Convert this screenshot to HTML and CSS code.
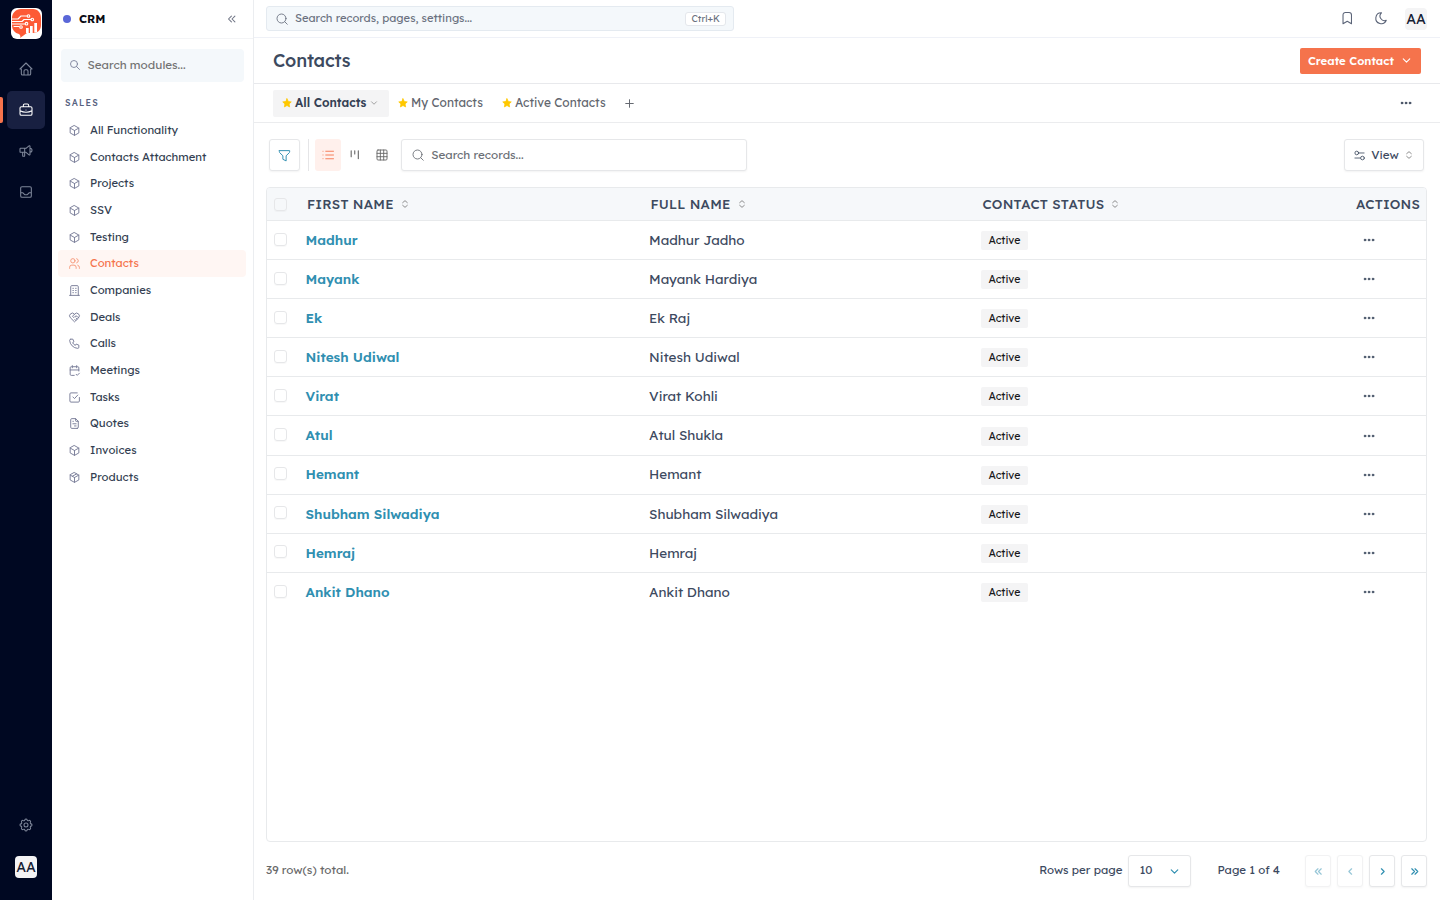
FILE: index.html
```
<!DOCTYPE html>
<html lang="en">
<head>
  <meta charset="UTF-8" />
  <title>Contacts - CRM</title>
  <link rel="stylesheet" href="styles.css">
</head>
<body>
  <svg class="sprite">
    <symbol id="home" viewBox="0 0 24 24"><path d="M5 12H3l9-9 9 9h-2M5 12v7a2 2 0 0 0 2 2h10a2 2 0 0 0 2-2v-7M9 21v-6a2 2 0 0 1 2-2h2a2 2 0 0 1 2 2v6"/></symbol>
    <symbol id="briefcase" viewBox="0 0 24 24"><path d="M5 7h14a2 2 0 0 1 2 2v9a2 2 0 0 1-2 2H5a2 2 0 0 1-2-2V9a2 2 0 0 1 2-2zM8 7V5a2 2 0 0 1 2-2h4a2 2 0 0 1 2 2v2M12 12v.01M3 13a20 20 0 0 0 18 0"/></symbol>
    <symbol id="speaker" viewBox="0 0 24 24"><path d="M18 8a3 3 0 0 1 0 6M10 8v11a1 1 0 0 1-1 1H8a1 1 0 0 1-1-1v-5M12 8l4.524-3.77A.9.9 0 0 1 18 4.922v12.156a.9.9 0 0 1-1.476.692L12 14H4a1 1 0 0 1-1-1V9a1 1 0 0 1 1-1h8"/></symbol>
    <symbol id="inbox" viewBox="0 0 24 24"><path d="M6 4h12a2 2 0 0 1 2 2v12a2 2 0 0 1-2 2H6a2 2 0 0 1-2-2V6a2 2 0 0 1 2-2zM4 13h3l3 3h4l3-3h3"/></symbol>
    <symbol id="settings" viewBox="0 0 24 24"><path d="M10.325 4.317c.426-1.756 2.924-1.756 3.35 0a1.724 1.724 0 0 0 2.573 1.066c1.543-.94 3.31.826 2.37 2.37a1.724 1.724 0 0 0 1.065 2.572c1.756.426 1.756 2.924 0 3.35a1.724 1.724 0 0 0-1.066 2.573c.94 1.543-.826 3.31-2.37 2.37a1.724 1.724 0 0 0-2.572 1.065c-.426 1.756-2.924 1.756-3.35 0a1.724 1.724 0 0 0-2.573-1.066c-1.543.94-3.31-.826-2.37-2.37a1.724 1.724 0 0 0-1.065-2.572c-1.756-.426-1.756-2.924 0-3.35a1.724 1.724 0 0 0 1.066-2.573c-.94-1.543.826-3.31 2.37-2.37 1 .608 2.296.07 2.572-1.065z"/><circle cx="12" cy="12" r="3"/></symbol>
    <symbol id="cube" viewBox="0 0 24 24"><path d="M12 3l8 4.5v9L12 21l-8-4.5v-9zM12 12l8-4.5M12 12v9M12 12L4 7.5"/></symbol>
    <symbol id="package" viewBox="0 0 24 24"><path d="M12 3l8 4.5v9L12 21l-8-4.5v-9zM12 12l8-4.5M12 12v9M12 12L4 7.5M16 5.25l-8 4.5"/></symbol>
    <symbol id="users" viewBox="0 0 24 24"><circle cx="9" cy="7" r="4"/><path d="M3 21v-2a4 4 0 0 1 4-4h4a4 4 0 0 1 4 4v2M16 3.13a4 4 0 0 1 0 7.75M21 21v-2a4 4 0 0 0-3-3.85"/></symbol>
    <symbol id="building" viewBox="0 0 24 24"><path d="M3 21h18M9 8h1M9 12h1M9 16h1M14 8h1M14 12h1M14 16h1M5 21V5a2 2 0 0 1 2-2h10a2 2 0 0 1 2 2v16"/></symbol>
    <symbol id="deal" viewBox="0 0 24 24"><path d="M19.5 12.572L12 20l-7.5-7.428A5 5 0 1 1 12 6.006a5 5 0 1 1 7.5 6.572M12 6L8.707 9.293a1 1 0 0 0 0 1.414l.543.543c.69.69 1.81.69 2.5 0l1-1a3.182 3.182 0 0 1 4.5 0l2.25 2.25M12.5 15.5l2 2M15 13l2 2"/></symbol>
    <symbol id="phone" viewBox="0 0 24 24"><path d="M5 4h4l2 5-2.5 1.5a11 11 0 0 0 5 5L15 13l5 2v4a2 2 0 0 1-2 2A16 16 0 0 1 3 6a2 2 0 0 1 2-2"/></symbol>
    <symbol id="calendar" viewBox="0 0 24 24"><path d="M11.5 21H6a2 2 0 0 1-2-2V7a2 2 0 0 1 2-2h12a2 2 0 0 1 2 2v6M16 3v4M8 3v4M4 11h16M15 19l2 2 4-4"/></symbol>
    <symbol id="checkbox" viewBox="0 0 24 24"><path d="M9 11l3 3 6-6.500M21 12v6.500a2 2 0 0 1-2 2H5.500a2 2 0 0 1-2-2V5.500a2 2 0 0 1 2-2H17"/></symbol>
    <symbol id="file" viewBox="0 0 24 24"><path d="M14 3v4a1 1 0 0 0 1 1h4M17 21H7a2 2 0 0 1-2-2V5a2 2 0 0 1 2-2h7l5 5v11a2 2 0 0 1-2 2zM9 8h1M9 12.500h6M12 16.500h3"/></symbol>
    <symbol id="search" viewBox="0 0 24 24"><circle cx="10" cy="10" r="7"/><path d="M21 21l-6-6"/></symbol>
    <symbol id="search-lg" viewBox="0 0 24 24"><circle cx="11" cy="11" r="9"/><path d="M22.500 22.500l-5-5"/></symbol>
    <symbol id="dbl-left" viewBox="0 0 24 24"><path d="M11 7l-5 5 5 5M17 7l-5 5 5 5"/></symbol>
    <symbol id="dbl-right" viewBox="0 0 24 24"><path d="M7 7l5 5-5 5M13 7l5 5-5 5"/></symbol>
    <symbol id="left" viewBox="0 0 24 24"><path d="M14 7l-5 5 5 5"/></symbol>
    <symbol id="right" viewBox="0 0 24 24"><path d="M10 7l5 5-5 5"/></symbol>
    <symbol id="down" viewBox="0 0 24 24"><path d="M6 9l6 6 6-6"/></symbol>
    <symbol id="sort" viewBox="0 0 24 24"><path d="M5 8l7-6 7 6M19 16l-7 6-7-6"/></symbol>
    <symbol id="bookmark" viewBox="0 0 24 24"><path d="M19 6.500v14.500l-7-4-7 4V6.500A4 4 0 0 1 9 2.500h6a4 4 0 0 1 4 4z"/></symbol>
    <symbol id="moon" viewBox="0 0 24 24"><path d="M12 3h.393a7.5 7.5 0 0 0 7.92 12.446A9 9 0 1 1 12 2.992z"/></symbol>
    <symbol id="star" viewBox="0 0 24 24"><path d="M12 1.8l3.1 6.5 7.1 1-5.2 5 1.3 7.1L12 18l-6.3 3.4L7 14.300l-5.200-5 7.100-1z"/></symbol>
    <symbol id="plus" viewBox="0 0 24 24"><path d="M12 5v14M5 12h14"/></symbol>
    <symbol id="dots" viewBox="0 0 24 24"><circle cx="4" cy="12" r="2"/><circle cx="12" cy="12" r="2"/><circle cx="20" cy="12" r="2"/></symbol>
    <symbol id="filter" viewBox="0 0 24 24"><path d="M2.500 3h19v2.400a2 2 0 0 1-.6 1.400L15 12.500V22l-6-3v-6.500L3.100 6.800a2 2 0 0 1-.6-1.400z"/></symbol>
    <symbol id="list" viewBox="0 0 24 24"><path d="M7.500 4.500H23M7.500 12H23M7.500 19.500H23M2 4.500v.01M2 12v.01M2 19.500v.01"/></symbol>
    <symbol id="kanban" viewBox="0 0 24 24"><path d="M3 2v15M12 2v8M21 2v20"/></symbol>
    <symbol id="grid" viewBox="0 0 24 24"><rect x="2" y="2" width="20" height="20" rx="2"/><path d="M2 8.700h20M2 15.400h20M8.700 2v20M15.400 2v20"/></symbol>
    <symbol id="sliders" viewBox="0 0 24 24"><circle cx="6" cy="6.500" r="4"/><circle cx="18.500" cy="17.500" r="4"/><path d="M10 6.500h12M2 17.500h12"/></symbol>
  </svg>

  <div class="app">
    <aside class="rail">
      <svg class="logo" viewBox="0 0 31 31">
        <rect width="31" height="31" rx="6" fill="#fff"/>
        <path d="M10 1h12c5 0 8 4 8 9v7c0 5-3 8-8 8h-6c-2 1-4 3-7 5 1-2 0-3-1-4-4-1-7-4-7-9v-7c0-5 4-9 9-9z" fill="#fd5a35"/>
        <g fill="none" stroke="#fff" stroke-width="1.100">
          <path d="M1 11h6l3-3h6M1 13.500h10l2-2h7M1 16h13M3 18.500h5"/>
          <circle cx="17.500" cy="8" r="1.300"/><circle cx="21.300" cy="11.500" r="1.300"/><circle cx="15.500" cy="15.700" r="1.300"/><circle cx="10" cy="19" r="1.300"/>
        </g>
        <path d="M15 20h2.700v5H15zM19 18h2.700v7H19zM23.300 15H26v9.500h-2.700z" fill="#fff"/>
      </svg>
      <a class="rail-item"><svg><use href="#home"/></svg></a>
      <a class="rail-item active"><svg><use href="#briefcase"/></svg></a>
      <a class="rail-item"><svg><use href="#speaker"/></svg></a>
      <a class="rail-item"><svg><use href="#inbox"/></svg></a>
      <a class="rail-item bottom"><svg><use href="#settings"/></svg></a>
      <span class="avatar">AA</span>
    </aside>

    <aside class="sidebar">
      <div class="side-head"><i class="dot"></i><b>CRM</b><svg><use href="#dbl-left"/></svg></div>
      <div class="side-search"><svg><use href="#search"/></svg><span>Search modules...</span></div>
      <div class="side-label">SALES</div>
      <nav>
        <a><svg><use href="#cube"/></svg><span>All Functionality</span></a>
        <a><svg><use href="#cube"/></svg><span>Contacts Attachment</span></a>
        <a><svg><use href="#cube"/></svg><span>Projects</span></a>
        <a><svg><use href="#cube"/></svg><span>SSV</span></a>
        <a><svg><use href="#cube"/></svg><span>Testing</span></a>
        <a class="active"><svg><use href="#users"/></svg><span>Contacts</span></a>
        <a><svg><use href="#building"/></svg><span>Companies</span></a>
        <a><svg><use href="#deal"/></svg><span>Deals</span></a>
        <a><svg><use href="#phone"/></svg><span>Calls</span></a>
        <a><svg><use href="#calendar"/></svg><span>Meetings</span></a>
        <a><svg><use href="#checkbox"/></svg><span>Tasks</span></a>
        <a><svg><use href="#file"/></svg><span>Quotes</span></a>
        <a><svg><use href="#cube"/></svg><span>Invoices</span></a>
        <a><svg><use href="#package"/></svg><span>Products</span></a>
      </nav>
    </aside>

    <main>
      <header class="topbar">
        <div class="global-search"><svg><use href="#search-lg"/></svg><span>Search records, pages, settings...</span><kbd>Ctrl+K</kbd></div>
        <div class="top-icons">
          <svg><use href="#bookmark"/></svg>
          <svg><use href="#moon"/></svg>
          <span class="avatar">AA</span>
        </div>
      </header>

      <div class="title-row">
        <h1>Contacts</h1>
        <button class="create"><span>Create Contact</span><svg><use href="#down"/></svg></button>
      </div>

      <div class="tabs">
        <a class="tab active"><svg class="star"><use href="#star"/></svg><span>All Contacts</span><svg class="caret"><use href="#down"/></svg></a>
        <a class="tab my"><svg class="star"><use href="#star"/></svg><span>My Contacts</span></a>
        <a class="tab"><svg class="star"><use href="#star"/></svg><span>Active Contacts</span></a>
        <svg class="add"><use href="#plus"/></svg>
        <svg class="dots"><use href="#dots"/></svg>
      </div>

      <div class="toolbar">
        <button class="box filter"><svg><use href="#filter"/></svg></button>
        <i class="sep"></i>
        <button class="mode active"><svg><use href="#list"/></svg></button>
        <button class="mode"><svg class="small"><use href="#kanban"/></svg></button>
        <button class="mode"><svg><use href="#grid"/></svg></button>
        <div class="box record-search"><svg><use href="#search-lg"/></svg><span>Search records...</span></div>
        <button class="box view"><svg><use href="#sliders"/></svg><span>View</span><svg class="sort"><use href="#sort"/></svg></button>
      </div>

      <section class="table">
        <div class="row head">
          <i class="check"></i>
          <div><span>FIRST NAME</span><svg class="sort"><use href="#sort"/></svg></div>
          <div><span>FULL NAME</span><svg class="sort"><use href="#sort"/></svg></div>
          <div><span>CONTACT STATUS</span><svg class="sort"><use href="#sort"/></svg></div>
          <div><span>ACTIONS</span></div>
        </div>
        <div id="rows"></div>
      </section>

      <footer>
        <span class="total">39 row(s) total.</span>
        <span class="per-page">Rows per page</span>
        <div class="box select"><span>10</span><svg><use href="#down"/></svg></div>
        <span class="page">Page 1 of 4</span>
        <div class="pager">
          <button class="box off"><svg><use href="#dbl-left"/></svg></button>
          <button class="box off"><svg><use href="#left"/></svg></button>
          <button class="box"><svg><use href="#right"/></svg></button>
          <button class="box"><svg><use href="#dbl-right"/></svg></button>
        </div>
      </footer>
    </main>
  </div>

  <script>
    const contacts = [
      ['Madhur', 'Madhur Jadho'],
      ['Mayank', 'Mayank Hardiya'],
      ['Ek', 'Ek Raj'],
      ['Nitesh Udiwal', 'Nitesh Udiwal'],
      ['Virat', 'Virat Kohli'],
      ['Atul', 'Atul Shukla'],
      ['Hemant', 'Hemant'],
      ['Shubham Silwadiya', 'Shubham Silwadiya'],
      ['Hemraj', 'Hemraj'],
      ['Ankit Dhano', 'Ankit Dhano']
    ];

    document.getElementById('rows').innerHTML = contacts.map(([first, full]) => `
      <div class="row">
        <i class="check"></i>
        <div class="cell"><a class="name">${first}</a></div>
        <div class="cell"><span class="full">${full}</span></div>
        <div><span class="badge">Active</span></div>
        <div><svg class="dots"><use href="#dots"/></svg></div>
      </div>`).join('');
  </script>
</body>
</html>
```
FILE: styles.css
```
* {
  box-sizing: border-box;
}
body {
  margin: 0;
  font-family: Lexend, Inter, sans-serif;
  font-size: 11.5px;
  color: #3d4a5f;
  background: #fff;
}
svg {
  width: 13px;
  height: 13px;
  flex: none;
  fill: none;
  stroke: currentColor;
  stroke-width: 1.8;
  stroke-linecap: round;
  stroke-linejoin: round;
}
button {
  font: inherit;
  border: none;
  padding: 0;
  background: none;
  color: inherit;
}
span, b, h1, a {
  white-space: nowrap;
}
.sprite {
  display: none;
}
.app {
  display: flex;
  height: 900px;
  overflow: hidden;
}

/* icon rail */
.rail {
  width: 52px;
  flex: none;
  background: #000822;
  display: flex;
  flex-direction: column;
  align-items: center;
  padding: 8px 0 22px;
}
.logo {
  width: 31px;
  height: 31px;
  margin-bottom: 10.5px;
  stroke: none;
}
.rail-item {
  width: 38px;
  height: 38px;
  margin-bottom: 3px;
  border-radius: 5px;
  display: flex;
  align-items: center;
  justify-content: center;
  color: #7d8699;
  position: relative;
}
.rail-item svg {
  width: 16px;
  height: 16px;
  stroke-width: 1.6;
}
.rail-item.active {
  background: #182041;
  color: #fff;
}
.rail-item.active::before {
  content: "";
  position: absolute;
  left: -7px;
  top: 6px;
  width: 3px;
  height: 26px;
  border-radius: 0 2px 2px 0;
  background: #f5734c;
}
.rail-item.bottom {
  margin-top: auto;
}
.rail-item.bottom svg {
  width: 16px;
  height: 16px;
}
.avatar {
  width: 22px;
  height: 22px;
  border-radius: 4px;
  background: #f4f4f5;
  color: #142033;
  font-size: 14px;
  line-height: 22px;
  text-align: center;
}
.rail .avatar {
  margin-top: 9px;
}

/* module list */
.sidebar {
  width: 202px;
  flex: none;
  border-right: 1px solid #ebedf0;
}
.side-head {
  height: 39px;
  padding: 0 14px 1px 11px;
  border-bottom: 1px solid #f3f4f6;
  display: flex;
  align-items: center;
}
.side-head b {
  margin-left: 8px;
  padding-bottom: 1px;
  font-size: 11.6px;
  font-weight: 700;
  color: #0a0a14;
}
.side-head svg {
  margin-left: auto;
  width: 14px;
  height: 14px;
  color: #707585;
}
.dot {
  width: 8px;
  height: 8px;
  border-radius: 50%;
  background: #5a67d8;
}
.side-search {
  margin: 10px 9px 0;
  height: 33px;
  padding: 0 8px 2px;
  border-radius: 4px;
  background: #f4f8fb;
  display: flex;
  align-items: center;
  gap: 6.5px;
  color: #737373;
  font-size: 11.67px;
}
.side-search svg {
  width: 12px;
  height: 12px;
  color: #7b809a;
}
.side-label {
  margin: 14px 0 8px 13px;
  line-height: 13px;
  font-size: 8.8px;
  font-weight: 500;
  letter-spacing: 1.2px;
  color: #56617e;
}
nav a {
  height: 26.67px;
  margin: 0 7px 0 6px;
  padding-left: 10px;
  border-radius: 4px;
  display: flex;
  align-items: center;
  gap: 9px;
  font-size: 11.3px;
  font-weight: 450;
  color: #343f52;
}
nav span {
  padding-bottom: .4px;
}
nav svg {
  margin-top: .4px;
  color: #7b809a;
}
nav .active {
  background: #fff6f3;
  color: #f5734c;
}
nav .active svg {
  color: #f69a7c;
}

/* content */
main {
  flex: 1;
  display: flex;
  flex-direction: column;
}
.topbar {
  height: 38px;
  border-bottom: 1px solid #eff1f7;
  padding: 0 13px 0 12px;
  display: flex;
  align-items: center;
  justify-content: space-between;
}
.global-search {
  width: 468px;
  height: 25px;
  padding: 0 7px 0 9px;
  border: 1px solid #e4eaf0;
  border-radius: 3px;
  background: #f4f8fb;
  display: flex;
  align-items: center;
  gap: 7px;
  font-size: 11.2px;
  color: #6b7280;
}
.global-search span {
  padding-bottom: 2px;
}
.global-search svg, .record-search svg {
  width: 12px;
  height: 12px;
}
kbd {
  margin-left: auto;
  padding: 0 5px;
  border: 1px solid #e4e7ec;
  border-radius: 3px;
  background: #fff;
  font-family: inherit;
  font-size: 9.4px;
  font-weight: 400;
  line-height: 12px;
}
.top-icons {
  display: flex;
  align-items: center;
  gap: 19px;
  color: #5b6478;
}
.top-icons svg {
  width: 14.5px;
  height: 14.5px;
}
.top-icons .avatar {
  margin-left: -2px;
}
.title-row {
  height: 46px;
  border-bottom: 1px solid #e8e9ec;
  padding: 0 19px;
  display: flex;
  align-items: center;
  justify-content: space-between;
}
h1 {
  margin: 0;
  font-size: 18px;
  font-weight: 500;
  letter-spacing: -.2px;
}
.create {
  width: 121px;
  height: 26px;
  padding: 0 8px;
  border-radius: 2px;
  background: #f5734c;
  color: #fff;
  font-size: 11.4px;
  font-weight: 600;
  display: flex;
  align-items: center;
  justify-content: space-between;
}
.create svg {
  width: 13px;
  height: 13px;
  stroke-width: 2;
}
.tabs {
  height: 39px;
  border-bottom: 1px solid #ebecee;
  padding: 0 28px 0 19px;
  display: flex;
  align-items: center;
  font-size: 11.9px;
  font-weight: 400;
  color: #62666e;
}
.tab {
  height: 27px;
  padding: 0 9px;
  display: flex;
  align-items: center;
  gap: 3px;
}
.tab span, .view span {
  padding-bottom: 1px;
}
.tab.active {
  width: 116px;
  border-radius: 2px;
  background: #f4f4f5;
  color: #344054;
  font-weight: 600;
}
.tab.my {
  width: 104px;
}
.star {
  width: 10px;
  height: 10px;
  fill: #ffc800;
  stroke: #ffc800;
}
.caret {
  width: 10px;
  height: 10px;
  stroke-width: 2;
  color: #929292;
}
.add {
  margin-left: 8px;
}
.dots {
  width: 12px;
  height: 12px;
  fill: currentColor;
  stroke-width: 1;
}
.tabs .dots {
  margin-left: auto;
  color: #344054;
}
.toolbar {
  height: 64px;
  padding: 0 16px 0 15px;
  display: flex;
  align-items: center;
}
.box {
  height: 32px;
  border: 1px solid #e6e7e9;
  border-radius: 3px;
  box-shadow: 0 1px 2px rgba(0, 0, 0, .05);
  background: #fff;
  display: flex;
  align-items: center;
}
.filter {
  width: 31px;
  justify-content: center;
  color: #308fb1;
}
.sep {
  width: 1px;
  height: 32px;
  margin: 0 6px 0 8px;
  background: #e5e5e7;
}
.mode {
  width: 26px;
  height: 32px;
  margin-right: 1.2px;
  border-radius: 3px;
  display: flex;
  align-items: center;
  justify-content: center;
  color: #666;
}
.mode svg {
  width: 12px;
  height: 12px;
}
.mode.active {
  background: #fff0ec;
  color: #f5734c;
}
.mode .small {
  width: 9.5px;
  height: 9.5px;
  stroke-width: 2.8;
}
.record-search {
  width: 346px;
  margin-left: 4px;
  padding-left: 10px;
  gap: 7.6px;
  font-size: 11.67px;
  color: #6b6f76;
}
.record-search span {
  padding-bottom: 2px;
}
.view {
  width: 80px;
  margin-left: auto;
  padding: 0 9px;
  justify-content: space-between;
  font-weight: 450;
  font-size: 11.67px;
}
.view svg:first-child {
  width: 11px;
  height: 11px;
}
.sort {
  width: 8px;
  height: 8px;
  stroke-width: 2.6;
  color: #7c7c7c;
}
.head .sort {
  margin-left: 1px;
}
.view .sort {
  margin-right: 1px;
}

.table {
  width: 1161px;
  height: 655px;
  margin: 0 0 0 12px;
  border: 1px solid #e8eaec;
  border-radius: 4px;
  overflow: hidden;
}
.row {
  height: 39.1px;
  display: grid;
  grid-template-columns: 38.5px 343.5px 332px 381px 1fr;
  align-items: center;
  border-bottom: 1px solid #e8eaec;
  font-size: 13.5px;
}
.row:last-child {
  border-bottom: none;
}
.row.head {
  height: 33px;
  background: #f6f8fa;
  border-bottom: 1px solid #e8eaec;
  font-size: 13.4px;
  font-weight: 500;
  letter-spacing: .2px;
}
.head div {
  display: flex;
  align-items: center;
  gap: 6px;
  padding-left: 1.5px;
}
.head div:last-child {
  padding-left: 0;
  margin-left: -6px;
}
.cell {
  padding-bottom: 1.4px;
}
.check {
  width: 13px;
  height: 13px;
  margin: 0 0 2px 6.5px;
  border: 1px solid #e6e7e9;
  border-radius: 3px;
  box-shadow: 0 1px 1px rgba(0, 0, 0, .03);
}
.head .check {
  margin-bottom: 0;
}
.name {
  font-weight: 600;
  color: #308fb1;
}
.row .dots {
  display: block;
  margin-left: 1px;
}
.badge {
  display: block;
  width: 47px;
  height: 19px;
  margin-top: 1px;
  border-radius: 2px;
  background: #f4f4f5;
  color: #18181b;
  font-size: 10.6px;
  font-weight: 450;
  line-height: 19px;
  text-align: center;
}

footer {
  height: 58px;
  padding: 0 13px 0 12px;
  display: flex;
  align-items: center;
  font-weight: 450;
}
footer span {
  padding-bottom: 3px;
}
.total {
  font-size: 11.67px;
  font-weight: 400;
  color: #696969;
}
.per-page {
  margin-left: auto;
  margin-right: 6px;
}
.select {
  width: 63px;
  padding: 0 9px 0 10px;
  justify-content: space-between;
  font-size: 11.8px;
  font-weight: 400;
}
.page {
  margin: 0 25px 0 26px;
}
.pager {
  display: flex;
  gap: 6px;
}
.pager .box {
  width: 26px;
  justify-content: center;
}
.select svg, .pager svg {
  width: 13px;
  height: 13px;
  stroke-width: 2.2;
  color: #308fb1;
}
.off {
  opacity: .5;
}
```
